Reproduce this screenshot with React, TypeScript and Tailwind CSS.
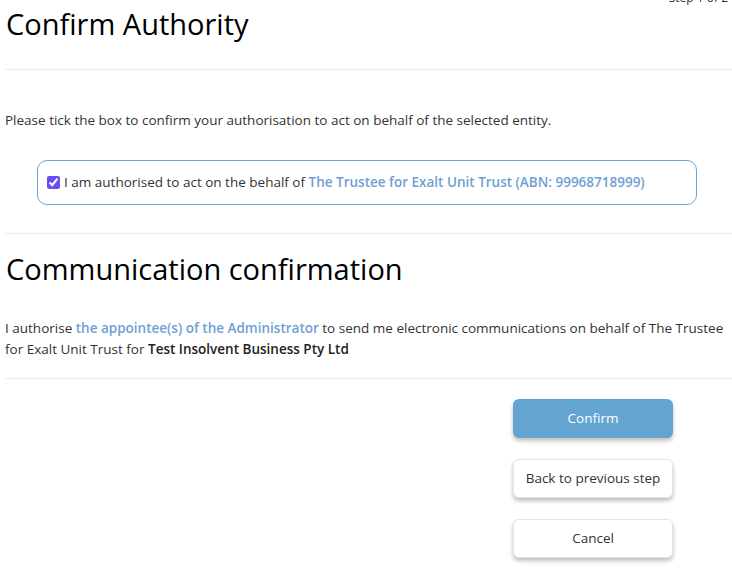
import type { ReactElement } from "react";

const font = { fontFamily: '"Open Sans", "Noto Sans", sans-serif' };

function Divider(): ReactElement {
  return <hr className="border-0 border-t border-[#ececec]" />;
}

function ActionButton({ label, primary }: { label: string; primary?: boolean }): ReactElement {
  return (
    <button
      type="button"
      className={
        primary
          ? "h-[39px] w-[160px] rounded-[6px] bg-[#63a4d1] text-[13.5px] text-white shadow-[0_3px_4px_rgba(0,0,0,0.25)]"
          : "h-[39px] w-[160px] rounded-[6px] border border-[#e4e4e4] bg-white text-[13.5px] text-[#333] shadow-[0_3px_4px_rgba(0,0,0,0.25)]"
      }
    >
      {label}
    </button>
  );
}

export default function App(): ReactElement {
  return (
    <div className="relative min-h-[569px] w-full overflow-hidden bg-white pl-[5px] text-[#333]" style={font}>
      <div className="absolute right-[4px] top-[-11px] text-[12px] text-[#333]">Step 1 of 2</div>

      <h1 className="pl-px pt-[5px] text-[29px] leading-[38px] text-black">Confirm Authority</h1>
      <div className="mt-[26px]">
        <Divider />
      </div>

      <p className="mt-[40px] text-[13.5px] leading-[20px]">
        Please tick the box to confirm your authorisation to act on behalf of the selected entity.
      </p>

      <label className="ml-[32px] mt-[30px] flex h-[45px] w-[660px] items-center gap-[4px] rounded-[10px] border border-[#67a7d8] pl-[9px] text-[13.5px]">
        <input type="checkbox" defaultChecked className="m-0 h-[13px] w-[13px] accent-[#6a4cf5]" />
        <span>
          I am authorised to act on the behalf of{" "}
          <span className="font-semibold text-[#6f9fd3]">The Trustee for Exalt Unit Trust (ABN: 99968718999)</span>
        </span>
      </label>

      <div className="mt-[28px]">
        <Divider />
      </div>

      <h2 className="mt-[16px] pl-px text-[29px] leading-[38px] text-black">Communication confirmation</h2>

      <p className="mt-[30px] pr-[8px] text-[13.5px] leading-[21px]">
        I authorise <span className="font-semibold text-[#6f9fd3]">the appointee(s) of the Administrator</span> to send me
        electronic communications on behalf of The Trustee for Exalt Unit Trust for{" "}
        <span className="font-semibold text-[#222]">Test Insolvent Business Pty Ltd</span>
      </p>

      <div className="mt-[18px]">
        <Divider />
      </div>

      <div className="flex flex-col items-end gap-[21px] pr-[59px] pt-[20px]">
        <ActionButton label="Confirm" primary />
        <ActionButton label="Back to previous step" />
        <ActionButton label="Cancel" />
      </div>
    </div>
  );
}
